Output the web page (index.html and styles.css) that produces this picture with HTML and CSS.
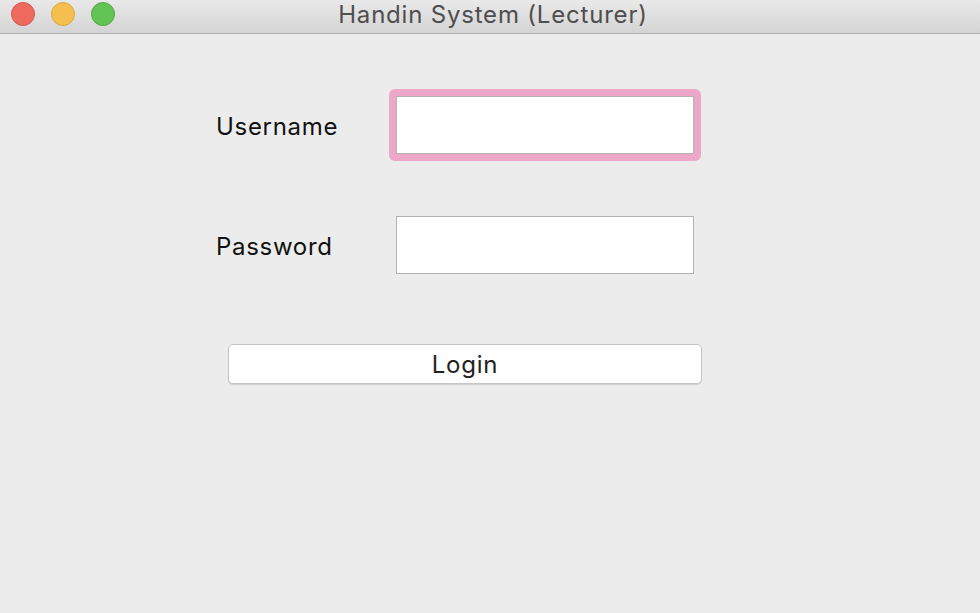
FILE: index.html
```html
<!DOCTYPE html>
<html>
<head>
<meta charset="utf-8">
<link rel="stylesheet" href="styles.css">
</head>
<body>
<div class="window">
  <div class="titlebar">
    <div class="lights">
      <span class="light red"></span>
      <span class="light yellow"></span>
      <span class="light green"></span>
    </div>
    <div class="title">Handin System (Lecturer)</div>
  </div>
  <div class="content">
    <div class="form">
      <label class="label">Username</label>
      <div class="focus-ring"><input class="field" type="text"></div>
      <label class="label">Password</label>
      <div class="plain"><input class="field" type="password"></div>
    </div>
    <button class="login">Login</button>
  </div>
</div>
</body>
</html>
```
FILE: styles.css
```css
* { box-sizing: border-box; }
html, body { margin: 0; padding: 0; }
body {
  width: 980px;
  height: 613px;
  overflow: hidden;
  background: #ececec;
  font-family: Inter, "Liberation Sans", sans-serif;
}
.window {
  width: 980px;
  height: 613px;
  background: #ececec;
}
.titlebar {
  position: relative;
  height: 34px;
  background: linear-gradient(#e9e9e9, #d4d4d4);
  border-bottom: 1px solid #b4b4b4;
  display: flex;
  align-items: center;
  justify-content: center;
}
.lights {
  position: absolute;
  left: 11px;
  top: 2px;
  display: flex;
  gap: 16px;
}
.light {
  width: 24px;
  height: 24px;
  border-radius: 50%;
  display: block;
}
.red { background: #ee6a5f; border: 1px solid #d9564b; }
.yellow { background: #f6be4f; border: 1px solid #dca442; }
.green { background: #61c454; border: 1px solid #52a840; }
.title {
  font-size: 24px;
  letter-spacing: 0.8px;
  color: #4e4e4e;
  margin-top: -4px;
  margin-left: 6px;
}
.content {
  padding-top: 62px;
  padding-left: 216px;
}
.form {
  display: grid;
  grid-template-columns: 180px 298px;
  grid-auto-rows: 58px;
  row-gap: 62px;
  align-items: center;
}
.label {
  font-size: 24px;
  letter-spacing: 0.7px;
  color: #111;
  padding-top: 3px;
}
.focus-ring {
  margin: -7px;
  padding: 7px;
  background: #eca7c9;
  border-radius: 6px;
  height: 72px;
}
.field {
  display: block;
  width: 298px;
  height: 58px;
  margin: 0;
  border: 1px solid #b3b3b3;
  background: #fff;
  outline: none;
  font-size: 20px;
  padding: 0 6px;
}
.login {
  display: block;
  margin-top: 70px;
  margin-left: 12px;
  width: 474px;
  height: 40px;
  background: #fff;
  border: 1px solid #c6c6c6;
  border-radius: 5px;
  box-shadow: 0 1px 1px rgba(0,0,0,0.12);
  font-family: Inter, "Liberation Sans", sans-serif;
  font-size: 24px;
  letter-spacing: 0.8px;
  color: #222;
  padding: 0;
}
```
